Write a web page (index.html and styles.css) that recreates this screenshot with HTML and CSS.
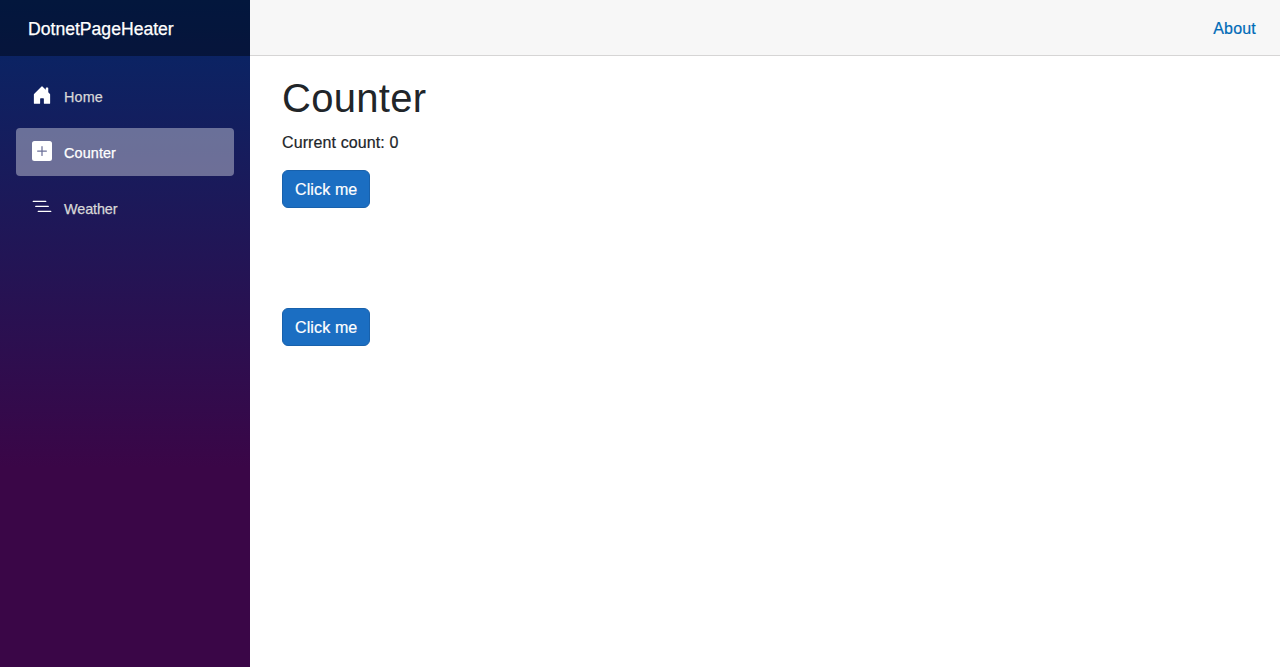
FILE: index.html
```html
<!DOCTYPE html>
<html lang="en">
<head>
<meta charset="utf-8">
<title>Counter</title>
<link rel="stylesheet" href="styles.css">
</head>
<body>
<div class="page">
  <aside class="sidebar">
    <div class="brand-row"><a class="brand">DotnetPageHeater</a></div>
    <nav class="nav">
      <a class="nav-link"><svg class="icon" viewBox="0 0 16 16"><path d="M6.5 14.5v-3.505c0-.245.25-.495.5-.495h2c.25 0 .5.25.5.5v3.5a.5.5 0 0 0 .5.5h4a.5.5 0 0 0 .5-.5v-7a.5.5 0 0 0-.146-.354L13 5.793V2.5a.5.5 0 0 0-.5-.5h-1a.5.5 0 0 0-.5.5v1.293L8.354 1.146a.5.5 0 0 0-.708 0l-6 6A.5.5 0 0 0 1.5 7.5v7a.5.5 0 0 0 .5.5h4a.5.5 0 0 0 .5-.5Z"/></svg><span class="label label-wide">Home</span></a>
      <a class="nav-link active"><svg class="icon" viewBox="0 0 16 16"><path d="M2 0a2 2 0 0 0-2 2v12a2 2 0 0 0 2 2h12a2 2 0 0 0 2-2V2a2 2 0 0 0-2-2H2zm6.5 4.5v3h3a.5.5 0 0 1 0 1h-3v3a.5.5 0 0 1-1 0v-3h-3a.5.5 0 0 1 0-1h3v-3a.5.5 0 0 1 1 0z"/></svg><span class="label label-wide">Counter</span></a>
      <a class="nav-link"><svg class="icon" viewBox="0 0 16 16"><path fill-rule="evenodd" d="M4.5 11.5A.5.5 0 0 1 5 11h10a.5.5 0 0 1 0 1H5a.5.5 0 0 1-.5-.5zm-2-4A.5.5 0 0 1 3 7h10a.5.5 0 0 1 0 1H3a.5.5 0 0 1-.5-.5zm-2-4A.5.5 0 0 1 1 3h10a.5.5 0 0 1 0 1H1a.5.5 0 0 1-.5-.5z"/></svg><span class="label label-tight">Weather</span></a>
    </nav>
  </aside>
  <main class="main">
    <header class="top-row"><a class="about">About</a></header>
    <article class="content">
      <h1 class="title">Counter</h1>
      <p class="count">Current count: 0</p>
      <button class="btn">Click me</button>
      <div class="spacer"></div>
      <button class="btn">Click me</button>
    </article>
  </main>
</div>
</body>
</html>
```

FILE: styles.css
```css
* { box-sizing: border-box; }
body {
  margin: 0;
  font-family: "Liberation Sans", Arial, sans-serif;
  font-size: 16px;
  line-height: 24px;
  color: #212529;
  background: #fff;
}
.page { display: flex; height: 667px; }
.sidebar {
  width: 250px;
  flex: none;
  background-image: linear-gradient(180deg, rgb(5, 39, 103) 0%, #3a0647 70%);
}
.brand-row {
  height: 56px;
  padding: 2px 0 0 28px;
  display: flex;
  align-items: center;
  background: rgba(0, 0, 0, 0.4);
}
.brand { font-size: 17.6px; color: #fff; -webkit-text-stroke: 0.25px; }
.nav { padding: 16px 16px 0; display: flex; flex-direction: column; gap: 8px; }
.nav-link {
  height: 48px;
  padding: 0 16px;
  display: flex;
  align-items: center;
  border-radius: 4px;
  font-size: 14.4px;
  color: #d7d7d7;
}
.nav-link.active { background: rgba(255, 255, 255, 0.37); color: #fff; }
.label { padding-top: 2px; -webkit-text-stroke: 0.25px; }
.label-wide { letter-spacing: 0.12px; }
.label-tight { letter-spacing: -0.1px; }
.icon { width: 20px; height: 20px; margin: -3px 12px 0 0; fill: #fff; }
.main { flex: 1; }
.top-row {
  height: 56px;
  padding: 2px 24px 0 0;
  display: flex;
  align-items: center;
  justify-content: flex-end;
  background: #f7f7f7;
  border-bottom: 1px solid #d6d5d5;
}
.about { color: #006bb7; letter-spacing: 0.2px; -webkit-text-stroke: 0.2px; }
.content { padding: 17.6px 24px 0 32px; }
.title {
  margin: 0 0 9px;
  font-size: 40px;
  font-weight: 400;
  line-height: 48px;
  letter-spacing: 0.3px;
}
.count { margin: 0 0 15px; letter-spacing: 0.11px; -webkit-text-stroke: 0.2px; }
.btn {
  display: block;
  width: 88px;
  height: 38px;
  padding: 8px 0 6px 12px;
  font: inherit;
  line-height: 22px;
  letter-spacing: 0.13px;
  text-align: left;
  color: #fff;
  background: #1b6ec2;
  border: 1px solid #1861ac;
  border-radius: 6px;
  -webkit-text-stroke: 0.2px;
}
.spacer { height: 100px; }
```
